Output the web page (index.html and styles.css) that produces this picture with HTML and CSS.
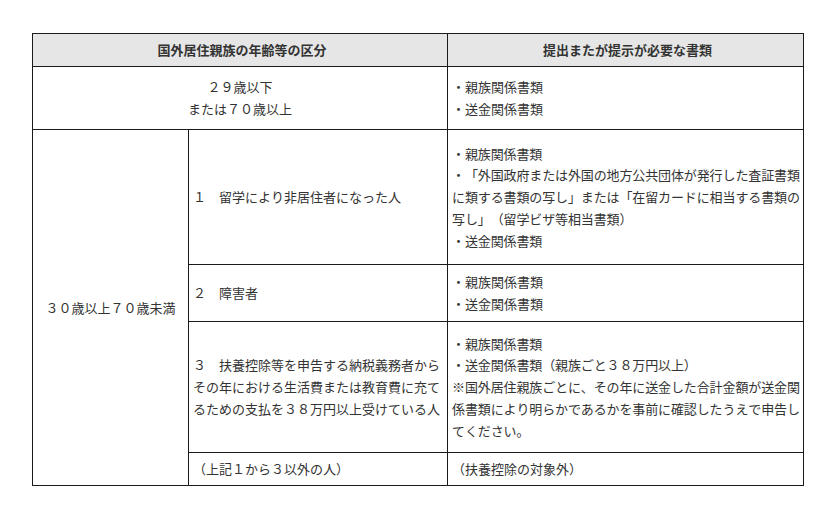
FILE: index.html
```html
<!DOCTYPE html>
<html lang="ja">
<head>
<meta charset="utf-8">
<title>国外居住親族の区分</title>
<link rel="stylesheet" href="styles.css">
</head>
<body>
<div class="page">
<table class="docs">
  <colgroup>
    <col class="c1">
    <col class="c2">
    <col class="c3">
  </colgroup>
  <thead>
    <tr class="r-head">
      <th colspan="2">国外居住親族の年齢等の区分</th>
      <th>提出またが提示が必要な書類</th>
    </tr>
  </thead>
  <tbody>
    <tr class="r1">
      <td colspan="2" class="center">２９歳以下<br>または７０歳以上</td>
      <td>・親族関係書類<br>・送金関係書類</td>
    </tr>
    <tr class="r2">
      <td rowspan="4" class="center">３０歳以上７０歳未満</td>
      <td>１　留学により非居住者になった人</td>
      <td class="nw tight">・親族関係書類<br>・「外国政府または外国の地方公共団体が発行した査証書類<br>に類する書類の写し」または「在留カードに相当する書類の<br>写し」（留学ビザ等相当書類）<br>・送金関係書類</td>
    </tr>
    <tr class="r3">
      <td>２　障害者</td>
      <td>・親族関係書類<br>・送金関係書類</td>
    </tr>
    <tr class="r4">
      <td class="nw">３　扶養控除等を申告する納税義務者から<br>その年における生活費または教育費に充て<br>るための支払を３８万円以上受けている人</td>
      <td class="nw tight">・親族関係書類<br>・送金関係書類（親族ごと３８万円以上）<br>※国外居住親族ごとに、その年に送金した合計金額が送金関<br>係書類により明らかであるかを事前に確認したうえで申告し<br>てください。</td>
    </tr>
    <tr class="r5">
      <td>（上記１から３以外の人）</td>
      <td>（扶養控除の対象外）</td>
    </tr>
  </tbody>
</table>
</div>
</body>
</html>
```
FILE: styles.css
```css
html, body {
  margin: 0;
  padding: 0;
  background: #ffffff;
}
.page {
  padding: 33px 0 0 32px;
}
.docs {
  border-collapse: collapse;
  table-layout: fixed;
  width: 771px;
  font-family: "Noto Sans CJK JP", "Noto Sans", sans-serif;
  font-size: 13px;
  line-height: 21.7px;
  color: #333333;
  text-spacing-trim: space-all;
  font-kerning: none;
}
.c1 { width: 156px; }
.c2 { width: 259px; }
.c3 { width: 356px; }
.docs th,
.docs td {
  border: 1px solid #1a1a1a;
  padding: 0 0 0 4px;
  vertical-align: middle;
  text-align: left;
}
.docs th {
  background: #e6e6e6;
  font-weight: bold;
  text-align: center;
}
.docs td.center {
  text-align: center;
  padding-left: 0;
}
.docs td.nw {
  white-space: nowrap;
}
.docs td.tight {
  letter-spacing: -0.12px;
}
.r-head { height: 33px; }
.r1 { height: 63px; }
.r2 { height: 135px; }
.r3 { height: 57px; }
.r4 { height: 131px; }
.r5 { height: 33px; }
```
